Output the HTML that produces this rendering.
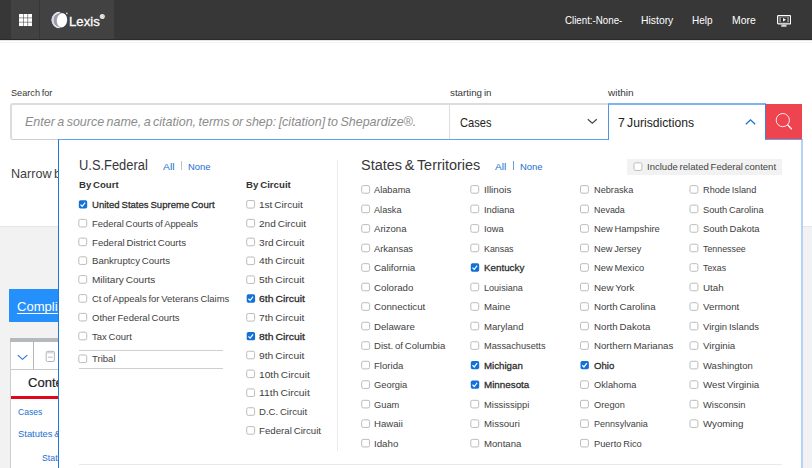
<!DOCTYPE html>
<html><head><meta charset="utf-8"><title>Lexis</title>
<style>
*{box-sizing:border-box;margin:0;padding:0}
html,body{width:812px;height:468px;overflow:hidden;background:#fff;font-family:"Liberation Sans",sans-serif;color:#373739}
body{position:relative}
.a{position:absolute}
.t{position:absolute;white-space:nowrap;display:inline-block;transform-origin:0 50%;word-spacing:-0.085em}
#hdr{left:0;top:0;width:812px;height:40px;background:#373738}
.cell{position:absolute;top:0;height:40px;background:#424243}
#clip{position:absolute;left:0;top:0;width:58.5px;height:468px;overflow:hidden}
#panel{position:absolute;left:58px;top:139px;width:745px;height:340px;background:#fff;border:1px solid #1f79d8;border-right:2px solid #b4d4f5;border-top-color:#5fa3e8}
</style></head><body>
<div id="hdr" class="a">
  <div class="cell" style="left:11.2px;width:28px"></div>
  <div class="cell" style="left:39.8px;width:73.8px"></div>
  <svg class="a" style="left:18.8px;top:14.4px" width="13.2" height="12.2" viewBox="0 0 13.2 12.2"><g fill="#fff"><rect x="0.00" y="0.00" width="4.0" height="3.65"/><rect x="4.55" y="0.00" width="4.0" height="3.65"/><rect x="9.10" y="0.00" width="4.0" height="3.65"/><rect x="0.00" y="4.20" width="4.0" height="3.65"/><rect x="4.55" y="4.20" width="4.0" height="3.65"/><rect x="9.10" y="4.20" width="4.0" height="3.65"/><rect x="0.00" y="8.40" width="4.0" height="3.65"/><rect x="4.55" y="8.40" width="4.0" height="3.65"/><rect x="9.10" y="8.40" width="4.0" height="3.65"/></g></svg>
  <svg class="a" style="left:51px;top:11px" width="18" height="18" viewBox="0 0 18 18"><circle cx="8.7" cy="9.1" r="7.7" fill="#9c9ca8"/><path d="M8.7 1.4 A7.7 7.7 0 0 0 8.7 16.8" stroke="#f4f4fa" stroke-width="1.1" fill="none"/><path d="M7.2 2 A7.6 7.6 0 0 0 6.6 16.2" stroke="#ececf8" stroke-width="1" fill="none"/><path d="M5.2 3 A7.4 7.4 0 0 0 4.4 14.9" stroke="#dcdcf0" stroke-width="0.9" fill="none"/><path d="M3.2 4.4 A7.4 7.4 0 0 0 2.8 13.6" stroke="#d0d0ea" stroke-width="0.8" fill="none"/><ellipse cx="10.9" cy="9.3" rx="5.1" ry="7.1" fill="#fff" transform="rotate(8 10.9 9.3)"/><circle cx="15.8" cy="2.4" r="0.8" fill="#e6e6e6"/></svg>
  <svg class="a" style="left:777px;top:15px" width="14.2" height="12.4" viewBox="0 0 14.2 12.4"><rect x="0.6" y="0.6" width="13" height="8.3" rx="0.8" fill="none" stroke="#fff" stroke-width="1.2"/><rect x="2.2" y="2.1" width="9.8" height="5.3" fill="#8c8c90"/><rect x="4" y="2.6" width="6.2" height="4.3" fill="#2c2c30"/><path d="M6 3 L9.2 4.75 L6 6.5Z" fill="#fff"/><rect x="4.3" y="9.6" width="5.2" height="2.2" fill="#cfd4d8"/></svg>
</div>
<div class="a" style="left:0;top:39px;width:812px;height:1px;background:#2a2a2a"></div>
<div class="a" style="left:0;top:40px;width:812px;height:1px;background:#e4e4e4"></div>
<div class="a" style="left:0;top:42px;width:812px;height:1px;background:#f5f5f5"></div>
<div class="a" style="left:0;top:226px;width:812px;height:243px;background:#f2f2f2;border-top:1px solid #e6e6e6"></div>
<!-- search bar -->
<div class="a" style="left:10px;top:103px;width:440px;height:37px;border:1px solid #cfcfcf;border-top:2px solid #dcdcdc;border-left:2px solid #dcdcdc;border-right:none;background:#fff;border-radius:3px 0 0 3px"></div>
<div class="a" style="left:449px;top:103px;width:160px;height:37px;border:1px solid #cfcfcf;border-top:2px solid #dcdcdc;border-left-color:#ddd;background:#fff"></div>
<svg class="a" style="left:586.8px;top:118.2px" width="11" height="7" viewBox="0 0 11 7"><path d="M0.8 1.2 L5.3 5.3 L9.8 1.2" fill="none" stroke="#444" stroke-width="1.15"/></svg>
<div id="clip">
<div class="a" style="left:9px;top:289px;width:60px;height:33px;background:#2590fc"></div>
<div class="a" style="left:10px;top:338px;width:60px;height:140px;background:#fff;border-left:1px solid #cdcdcd"></div>
<div class="a" style="left:10px;top:338px;width:60px;height:4px;background:#b6b9bb"></div>
<div class="a" style="left:33px;top:342px;width:1px;height:28px;background:#b4b4b4"></div>
<div class="a" style="left:11px;top:369px;width:60px;height:1px;background:#c8c8c8"></div>
<svg class="a" style="left:16.8px;top:354.1px" width="11" height="7" viewBox="0 0 11 7"><path d="M0.7 1.2 L5.5 5.4 L10.3 1.2" fill="none" stroke="#1b6fd8" stroke-width="1.05"/></svg>
<svg class="a" style="left:45px;top:349.5px" width="11" height="13" viewBox="0 0 11 13"><rect x="1.2" y="1.3" width="8.2" height="10.2" rx="1.4" fill="#fff" stroke="#b4b4c0" stroke-width="1"/><rect x="1.8" y="2" width="7" height="1.4" fill="#d8d8d8"/><rect x="3" y="6.7" width="4.6" height="0.9" fill="#b4b4b4"/></svg>
<div class="a" style="left:11px;top:396px;width:60px;height:3px;background:#e2061a"></div>
</div>
<span class="t" id="t0" style="left:69px;top:14.25px;font-size:13.7px;line-height:15px;transform:scaleX(0.9639);color:#fff;-webkit-text-stroke:0.3px #fff">Lexis</span>
<span class="t" id="t1" style="left:100px;top:14.25px;font-size:5.6px;line-height:6px;transform:scaleX(1.0909);color:#fff;font-weight:bold;-webkit-text-stroke:0.3px #fff">®</span>
<span class="t" id="t2" style="left:565px;top:14.25px;font-size:10.5px;line-height:12px;transform:scaleX(0.9263);color:#fff">Client:-None-</span>
<span class="t" id="t3" style="left:641px;top:14.25px;font-size:10.5px;line-height:12px;transform:scaleX(0.9886);color:#fff">History</span>
<span class="t" id="t4" style="left:692px;top:14.25px;font-size:10.5px;line-height:12px;transform:scaleX(0.9487);color:#fff">Help</span>
<span class="t" id="t5" style="left:732px;top:14.25px;font-size:10.5px;line-height:12px;transform:scaleX(0.9901);color:#fff">More</span>
<span class="t" id="t6" style="left:11px;top:87.25px;font-size:9.8px;line-height:11px;transform:scaleX(0.9330);color:#373739">Search for</span>
<span class="t" id="t7" style="left:450px;top:87.25px;font-size:9.8px;line-height:11px;transform:scaleX(0.9974);color:#373739">starting in</span>
<span class="t" id="t8" style="left:608px;top:87.25px;font-size:9.8px;line-height:11px;transform:scaleX(1.0254);color:#373739">within</span>
<span class="t" id="t9" style="left:25px;top:115.25px;font-size:12.6px;line-height:14px;transform:scaleX(0.9921);color:#8c8c8c;font-style:italic">Enter a source name, a citation, terms or shep: [citation] to Shepardize®.</span>
<span class="t" id="t10" style="left:460px;top:116.25px;font-size:12.6px;line-height:14px;transform:scaleX(0.8823);color:#222">Cases</span>
<span class="t" id="t12" style="left:11px;top:167.25px;font-size:12.4px;line-height:14px;transform:scaleX(1.0153);color:#3e3e40">Narrow by</span>
<span class="t" id="t13" style="left:17px;top:299.25px;font-size:12.8px;line-height:15px;transform:scaleX(1.0194);color:#fff;text-decoration:underline;text-decoration-thickness:1px;text-underline-offset:1.5px">Compliance</span>
<span class="t" id="t14" style="left:28px;top:375.25px;font-size:12.9px;line-height:15px;transform:scaleX(1.0098);color:#222;-webkit-text-stroke:0.2px #222">Content</span>
<span class="t" id="t15" style="left:18px;top:406.25px;font-size:9.8px;line-height:11px;transform:scaleX(0.8783);color:#1b70d0">Cases</span>
<span class="t" id="t16" style="left:18px;top:428.25px;font-size:9.8px;line-height:11px;transform:scaleX(0.9596);color:#1b70d0">Statutes &amp;</span>
<span class="t" id="t17" style="left:42px;top:452.25px;font-size:9.8px;line-height:11px;transform:scaleX(0.8946);color:#1b70d0">Statutes</span>
<div id="panel"></div>
<div class="a" id="pin" style="left:0;top:0;width:812px;height:468px;z-index:10">
<div class="a" style="left:608px;top:103px;width:158px;height:37px;border:1px solid #4a96e4;border-top:2px solid #7fb5ed;border-bottom:none;background:#fff"></div>
<svg class="a" style="left:744.5px;top:118.4px" width="11" height="8" viewBox="0 0 11 8"><path d="M0.8 6.3 L5.5 1.8 L10.2 6.3" fill="none" stroke="#1b6fd8" stroke-width="1.25"/></svg>
<div class="a" style="left:765px;top:104px;width:37px;height:35px;background:#ee444f;border-left:1px solid #3a86dc"></div>
<svg class="a" style="left:773.1px;top:109.9px" width="22" height="22" viewBox="0 0 22 22"><circle cx="9.8" cy="10.1" r="6.6" fill="none" stroke="#ffeef0" stroke-width="0.95"/><path d="M14.5 14.8 L18.8 19.2" stroke="#fff" stroke-width="1.3"/></svg>
<div class="a" style="left:181.2px;top:161.4px;width:1px;height:8.6px;background:#b9c4d0"></div>
<div class="a" style="left:513.1px;top:161.4px;width:1px;height:8.6px;background:#6aa0dc"></div>
<div class="a" style="left:627px;top:159px;width:154.8px;height:16px;background:#f2f2f2"></div>
<div class="a" style="left:337.2px;top:160px;width:1px;height:291px;background:#ebebeb"></div>
<div class="a" style="left:78.5px;top:349.6px;width:144.3px;height:1px;background:#cfcfcf"></div>
<div class="a" style="left:78.5px;top:367.8px;width:144.3px;height:1px;background:#cfcfcf"></div>
<div class="a" style="left:78.5px;top:464.4px;width:703.4px;height:1px;background:#e9e9e9"></div>
<svg class="a" style="left:0;top:0" width="812" height="468" viewBox="0 0 812 468">
<rect x="634.00" y="162.85" width="7.90" height="7.60" rx="1.6" fill="#fff" stroke="#bcbcbc" stroke-width="1"/>
<rect x="78.80" y="200.25" width="8.40" height="8.30" rx="1.7" fill="#1271d6"/><path d="M80.50 204.60 l1.75 1.7 l2.9 -3.75" fill="none" stroke="#fff" stroke-width="1.2"/>
<rect x="78.80" y="219.35" width="7.90" height="7.60" rx="1.6" fill="#fff" stroke="#bcbcbc" stroke-width="1"/>
<rect x="78.80" y="238.10" width="7.90" height="7.60" rx="1.6" fill="#fff" stroke="#bcbcbc" stroke-width="1"/>
<rect x="78.80" y="256.85" width="7.90" height="7.60" rx="1.6" fill="#fff" stroke="#bcbcbc" stroke-width="1"/>
<rect x="78.80" y="275.60" width="7.90" height="7.60" rx="1.6" fill="#fff" stroke="#bcbcbc" stroke-width="1"/>
<rect x="78.80" y="294.60" width="7.90" height="7.60" rx="1.6" fill="#fff" stroke="#bcbcbc" stroke-width="1"/>
<rect x="78.80" y="313.35" width="7.90" height="7.60" rx="1.6" fill="#fff" stroke="#bcbcbc" stroke-width="1"/>
<rect x="78.80" y="332.20" width="7.90" height="7.60" rx="1.6" fill="#fff" stroke="#bcbcbc" stroke-width="1"/>
<rect x="78.80" y="355.00" width="7.90" height="7.60" rx="1.6" fill="#fff" stroke="#bcbcbc" stroke-width="1"/>
<rect x="246.70" y="200.50" width="7.90" height="7.60" rx="1.6" fill="#fff" stroke="#bcbcbc" stroke-width="1"/>
<rect x="246.70" y="219.34" width="7.90" height="7.60" rx="1.6" fill="#fff" stroke="#bcbcbc" stroke-width="1"/>
<rect x="246.70" y="238.18" width="7.90" height="7.60" rx="1.6" fill="#fff" stroke="#bcbcbc" stroke-width="1"/>
<rect x="246.70" y="257.02" width="7.90" height="7.60" rx="1.6" fill="#fff" stroke="#bcbcbc" stroke-width="1"/>
<rect x="246.70" y="275.86" width="7.90" height="7.60" rx="1.6" fill="#fff" stroke="#bcbcbc" stroke-width="1"/>
<rect x="246.70" y="294.35" width="8.40" height="8.30" rx="1.7" fill="#1271d6"/><path d="M248.40 298.70 l1.75 1.7 l2.9 -3.75" fill="none" stroke="#fff" stroke-width="1.2"/>
<rect x="246.70" y="313.54" width="7.90" height="7.60" rx="1.6" fill="#fff" stroke="#bcbcbc" stroke-width="1"/>
<rect x="246.70" y="332.03" width="8.40" height="8.30" rx="1.7" fill="#1271d6"/><path d="M248.40 336.38 l1.75 1.7 l2.9 -3.75" fill="none" stroke="#fff" stroke-width="1.2"/>
<rect x="246.70" y="351.22" width="7.90" height="7.60" rx="1.6" fill="#fff" stroke="#bcbcbc" stroke-width="1"/>
<rect x="246.70" y="370.06" width="7.90" height="7.60" rx="1.6" fill="#fff" stroke="#bcbcbc" stroke-width="1"/>
<rect x="246.70" y="388.90" width="7.90" height="7.60" rx="1.6" fill="#fff" stroke="#bcbcbc" stroke-width="1"/>
<rect x="246.70" y="407.74" width="7.90" height="7.60" rx="1.6" fill="#fff" stroke="#bcbcbc" stroke-width="1"/>
<rect x="246.70" y="426.58" width="7.90" height="7.60" rx="1.6" fill="#fff" stroke="#bcbcbc" stroke-width="1"/>
<rect x="361.70" y="185.60" width="7.90" height="7.60" rx="1.6" fill="#fff" stroke="#bcbcbc" stroke-width="1"/>
<rect x="361.70" y="205.12" width="7.90" height="7.60" rx="1.6" fill="#fff" stroke="#bcbcbc" stroke-width="1"/>
<rect x="361.70" y="224.64" width="7.90" height="7.60" rx="1.6" fill="#fff" stroke="#bcbcbc" stroke-width="1"/>
<rect x="361.70" y="244.16" width="7.90" height="7.60" rx="1.6" fill="#fff" stroke="#bcbcbc" stroke-width="1"/>
<rect x="361.70" y="263.68" width="7.90" height="7.60" rx="1.6" fill="#fff" stroke="#bcbcbc" stroke-width="1"/>
<rect x="361.70" y="283.20" width="7.90" height="7.60" rx="1.6" fill="#fff" stroke="#bcbcbc" stroke-width="1"/>
<rect x="361.70" y="302.72" width="7.90" height="7.60" rx="1.6" fill="#fff" stroke="#bcbcbc" stroke-width="1"/>
<rect x="361.70" y="322.24" width="7.90" height="7.60" rx="1.6" fill="#fff" stroke="#bcbcbc" stroke-width="1"/>
<rect x="361.70" y="341.76" width="7.90" height="7.60" rx="1.6" fill="#fff" stroke="#bcbcbc" stroke-width="1"/>
<rect x="361.70" y="361.28" width="7.90" height="7.60" rx="1.6" fill="#fff" stroke="#bcbcbc" stroke-width="1"/>
<rect x="361.70" y="380.80" width="7.90" height="7.60" rx="1.6" fill="#fff" stroke="#bcbcbc" stroke-width="1"/>
<rect x="361.70" y="400.32" width="7.90" height="7.60" rx="1.6" fill="#fff" stroke="#bcbcbc" stroke-width="1"/>
<rect x="361.70" y="419.84" width="7.90" height="7.60" rx="1.6" fill="#fff" stroke="#bcbcbc" stroke-width="1"/>
<rect x="361.70" y="439.36" width="7.90" height="7.60" rx="1.6" fill="#fff" stroke="#bcbcbc" stroke-width="1"/>
<rect x="470.80" y="185.60" width="7.90" height="7.60" rx="1.6" fill="#fff" stroke="#bcbcbc" stroke-width="1"/>
<rect x="470.80" y="205.12" width="7.90" height="7.60" rx="1.6" fill="#fff" stroke="#bcbcbc" stroke-width="1"/>
<rect x="470.80" y="224.64" width="7.90" height="7.60" rx="1.6" fill="#fff" stroke="#bcbcbc" stroke-width="1"/>
<rect x="470.80" y="244.16" width="7.90" height="7.60" rx="1.6" fill="#fff" stroke="#bcbcbc" stroke-width="1"/>
<rect x="470.80" y="263.33" width="8.40" height="8.30" rx="1.7" fill="#1271d6"/><path d="M472.50 267.68 l1.75 1.7 l2.9 -3.75" fill="none" stroke="#fff" stroke-width="1.2"/>
<rect x="470.80" y="283.20" width="7.90" height="7.60" rx="1.6" fill="#fff" stroke="#bcbcbc" stroke-width="1"/>
<rect x="470.80" y="302.72" width="7.90" height="7.60" rx="1.6" fill="#fff" stroke="#bcbcbc" stroke-width="1"/>
<rect x="470.80" y="322.24" width="7.90" height="7.60" rx="1.6" fill="#fff" stroke="#bcbcbc" stroke-width="1"/>
<rect x="470.80" y="341.76" width="7.90" height="7.60" rx="1.6" fill="#fff" stroke="#bcbcbc" stroke-width="1"/>
<rect x="470.80" y="360.93" width="8.40" height="8.30" rx="1.7" fill="#1271d6"/><path d="M472.50 365.28 l1.75 1.7 l2.9 -3.75" fill="none" stroke="#fff" stroke-width="1.2"/>
<rect x="470.80" y="380.45" width="8.40" height="8.30" rx="1.7" fill="#1271d6"/><path d="M472.50 384.80 l1.75 1.7 l2.9 -3.75" fill="none" stroke="#fff" stroke-width="1.2"/>
<rect x="470.80" y="400.32" width="7.90" height="7.60" rx="1.6" fill="#fff" stroke="#bcbcbc" stroke-width="1"/>
<rect x="470.80" y="419.84" width="7.90" height="7.60" rx="1.6" fill="#fff" stroke="#bcbcbc" stroke-width="1"/>
<rect x="470.80" y="439.36" width="7.90" height="7.60" rx="1.6" fill="#fff" stroke="#bcbcbc" stroke-width="1"/>
<rect x="580.50" y="185.60" width="7.90" height="7.60" rx="1.6" fill="#fff" stroke="#bcbcbc" stroke-width="1"/>
<rect x="580.50" y="205.12" width="7.90" height="7.60" rx="1.6" fill="#fff" stroke="#bcbcbc" stroke-width="1"/>
<rect x="580.50" y="224.64" width="7.90" height="7.60" rx="1.6" fill="#fff" stroke="#bcbcbc" stroke-width="1"/>
<rect x="580.50" y="244.16" width="7.90" height="7.60" rx="1.6" fill="#fff" stroke="#bcbcbc" stroke-width="1"/>
<rect x="580.50" y="263.68" width="7.90" height="7.60" rx="1.6" fill="#fff" stroke="#bcbcbc" stroke-width="1"/>
<rect x="580.50" y="283.20" width="7.90" height="7.60" rx="1.6" fill="#fff" stroke="#bcbcbc" stroke-width="1"/>
<rect x="580.50" y="302.72" width="7.90" height="7.60" rx="1.6" fill="#fff" stroke="#bcbcbc" stroke-width="1"/>
<rect x="580.50" y="322.24" width="7.90" height="7.60" rx="1.6" fill="#fff" stroke="#bcbcbc" stroke-width="1"/>
<rect x="580.50" y="341.76" width="7.90" height="7.60" rx="1.6" fill="#fff" stroke="#bcbcbc" stroke-width="1"/>
<rect x="580.50" y="360.93" width="8.40" height="8.30" rx="1.7" fill="#1271d6"/><path d="M582.20 365.28 l1.75 1.7 l2.9 -3.75" fill="none" stroke="#fff" stroke-width="1.2"/>
<rect x="580.50" y="380.80" width="7.90" height="7.60" rx="1.6" fill="#fff" stroke="#bcbcbc" stroke-width="1"/>
<rect x="580.50" y="400.32" width="7.90" height="7.60" rx="1.6" fill="#fff" stroke="#bcbcbc" stroke-width="1"/>
<rect x="580.50" y="419.84" width="7.90" height="7.60" rx="1.6" fill="#fff" stroke="#bcbcbc" stroke-width="1"/>
<rect x="580.50" y="439.36" width="7.90" height="7.60" rx="1.6" fill="#fff" stroke="#bcbcbc" stroke-width="1"/>
<rect x="690.00" y="185.60" width="7.90" height="7.60" rx="1.6" fill="#fff" stroke="#bcbcbc" stroke-width="1"/>
<rect x="690.00" y="205.12" width="7.90" height="7.60" rx="1.6" fill="#fff" stroke="#bcbcbc" stroke-width="1"/>
<rect x="690.00" y="224.64" width="7.90" height="7.60" rx="1.6" fill="#fff" stroke="#bcbcbc" stroke-width="1"/>
<rect x="690.00" y="244.16" width="7.90" height="7.60" rx="1.6" fill="#fff" stroke="#bcbcbc" stroke-width="1"/>
<rect x="690.00" y="263.68" width="7.90" height="7.60" rx="1.6" fill="#fff" stroke="#bcbcbc" stroke-width="1"/>
<rect x="690.00" y="283.20" width="7.90" height="7.60" rx="1.6" fill="#fff" stroke="#bcbcbc" stroke-width="1"/>
<rect x="690.00" y="302.72" width="7.90" height="7.60" rx="1.6" fill="#fff" stroke="#bcbcbc" stroke-width="1"/>
<rect x="690.00" y="322.24" width="7.90" height="7.60" rx="1.6" fill="#fff" stroke="#bcbcbc" stroke-width="1"/>
<rect x="690.00" y="341.76" width="7.90" height="7.60" rx="1.6" fill="#fff" stroke="#bcbcbc" stroke-width="1"/>
<rect x="690.00" y="361.28" width="7.90" height="7.60" rx="1.6" fill="#fff" stroke="#bcbcbc" stroke-width="1"/>
<rect x="690.00" y="380.80" width="7.90" height="7.60" rx="1.6" fill="#fff" stroke="#bcbcbc" stroke-width="1"/>
<rect x="690.00" y="400.32" width="7.90" height="7.60" rx="1.6" fill="#fff" stroke="#bcbcbc" stroke-width="1"/>
<rect x="690.00" y="419.84" width="7.90" height="7.60" rx="1.6" fill="#fff" stroke="#bcbcbc" stroke-width="1"/>
</svg>
<span class="t" id="t11" style="left:618px;top:116.25px;font-size:12.6px;line-height:14px;transform:scaleX(0.9653);color:#222">7 Jurisdictions</span>
<span class="t" id="t18" style="left:79px;top:157.25px;font-size:14px;line-height:16px;transform:scaleX(0.9210);color:#373739">U.S.Federal</span>
<span class="t" id="t19" style="left:163px;top:161.25px;font-size:9.6px;line-height:11px;transform:scaleX(1.0776);color:#1a6fd0">All</span>
<span class="t" id="t20" style="left:188px;top:161.25px;font-size:9.6px;line-height:11px;transform:scaleX(0.9809);color:#1a6fd0">None</span>
<span class="t" id="t21" style="left:79px;top:179.25px;font-size:9.9px;line-height:11px;transform:scaleX(0.9692);color:#333;font-weight:bold">By Court</span>
<span class="t" id="t22" style="left:246px;top:179.25px;font-size:9.9px;line-height:11px;transform:scaleX(0.9779);color:#333;font-weight:bold">By Circuit</span>
<span class="t" id="t23" style="left:361px;top:157.25px;font-size:14px;line-height:16px;transform:scaleX(1.0316);color:#373739">States &amp; Territories</span>
<span class="t" id="t24" style="left:495px;top:161.25px;font-size:9.6px;line-height:11px;transform:scaleX(1.0589);color:#1a6fd0">All</span>
<span class="t" id="t25" style="left:520px;top:161.25px;font-size:9.6px;line-height:11px;transform:scaleX(0.9853);color:#1a6fd0">None</span>
<span class="t" id="t26" style="left:647px;top:161.25px;font-size:9.8px;line-height:11px;transform:scaleX(0.9734);color:#444">Include related Federal content</span>
<span class="t" id="t27" style="left:92px;top:199.25px;font-size:9.9px;line-height:11px;transform:scaleX(0.9690);color:#2a2a2a;-webkit-text-stroke:0.26px #2a2a2a">United States Supreme Court</span>
<span class="t" id="t28" style="left:92px;top:218.25px;font-size:9.9px;line-height:11px;transform:scaleX(0.9498);color:#3e3e3e">Federal Courts of Appeals</span>
<span class="t" id="t29" style="left:92px;top:237.25px;font-size:9.9px;line-height:11px;transform:scaleX(0.9741);color:#3e3e3e">Federal District Courts</span>
<span class="t" id="t30" style="left:92px;top:255.25px;font-size:9.9px;line-height:11px;transform:scaleX(0.9709);color:#3e3e3e">Bankruptcy Courts</span>
<span class="t" id="t31" style="left:92px;top:274.25px;font-size:9.9px;line-height:11px;transform:scaleX(1.0166);color:#3e3e3e">Military Courts</span>
<span class="t" id="t32" style="left:92px;top:293.25px;font-size:9.9px;line-height:11px;transform:scaleX(0.9571);color:#3e3e3e">Ct of Appeals for Veterans Claims</span>
<span class="t" id="t33" style="left:92px;top:312.25px;font-size:9.9px;line-height:11px;transform:scaleX(0.9613);color:#3e3e3e">Other Federal Courts</span>
<span class="t" id="t34" style="left:92px;top:331.25px;font-size:9.9px;line-height:11px;transform:scaleX(0.9608);color:#3e3e3e">Tax Court</span>
<span class="t" id="t35" style="left:92px;top:353.25px;font-size:9.9px;line-height:11px;transform:scaleX(0.9680);color:#3e3e3e">Tribal</span>
<span class="t" id="t36" style="left:259px;top:199.25px;font-size:9.9px;line-height:11px;transform:scaleX(1.0171);color:#3e3e3e">1st Circuit</span>
<span class="t" id="t37" style="left:259px;top:218.25px;font-size:9.9px;line-height:11px;transform:scaleX(1.0149);color:#3e3e3e">2nd Circuit</span>
<span class="t" id="t38" style="left:259px;top:237.25px;font-size:9.9px;line-height:11px;transform:scaleX(1.0259);color:#3e3e3e">3rd Circuit</span>
<span class="t" id="t39" style="left:259px;top:255.25px;font-size:9.9px;line-height:11px;transform:scaleX(1.0384);color:#3e3e3e">4th Circuit</span>
<span class="t" id="t40" style="left:259px;top:274.25px;font-size:9.9px;line-height:11px;transform:scaleX(1.0384);color:#3e3e3e">5th Circuit</span>
<span class="t" id="t41" style="left:259px;top:293.25px;font-size:9.9px;line-height:11px;transform:scaleX(1.0521);color:#2a2a2a;-webkit-text-stroke:0.26px #2a2a2a">6th Circuit</span>
<span class="t" id="t42" style="left:259px;top:312.25px;font-size:9.9px;line-height:11px;transform:scaleX(1.0384);color:#3e3e3e">7th Circuit</span>
<span class="t" id="t43" style="left:259px;top:331.25px;font-size:9.9px;line-height:11px;transform:scaleX(1.0521);color:#2a2a2a;-webkit-text-stroke:0.26px #2a2a2a">8th Circuit</span>
<span class="t" id="t44" style="left:259px;top:350.25px;font-size:9.9px;line-height:11px;transform:scaleX(1.0384);color:#3e3e3e">9th Circuit</span>
<span class="t" id="t45" style="left:259px;top:369.25px;font-size:9.9px;line-height:11px;transform:scaleX(1.0344);color:#3e3e3e">10th Circuit</span>
<span class="t" id="t46" style="left:259px;top:387.25px;font-size:9.9px;line-height:11px;transform:scaleX(1.0501);color:#3e3e3e">11th Circuit</span>
<span class="t" id="t47" style="left:259px;top:406.25px;font-size:9.9px;line-height:11px;transform:scaleX(0.9680);color:#3e3e3e">D.C. Circuit</span>
<span class="t" id="t48" style="left:259px;top:425.25px;font-size:9.9px;line-height:11px;transform:scaleX(0.9791);color:#3e3e3e">Federal Circuit</span>
<span class="t" id="t49" style="left:374px;top:184.25px;font-size:9.9px;line-height:11px;transform:scaleX(0.9363);color:#3e3e3e">Alabama</span>
<span class="t" id="t50" style="left:374px;top:204.25px;font-size:9.9px;line-height:11px;transform:scaleX(0.9295);color:#3e3e3e">Alaska</span>
<span class="t" id="t51" style="left:374px;top:223.25px;font-size:9.9px;line-height:11px;transform:scaleX(0.9721);color:#3e3e3e">Arizona</span>
<span class="t" id="t52" style="left:374px;top:243.25px;font-size:9.9px;line-height:11px;transform:scaleX(0.9485);color:#3e3e3e">Arkansas</span>
<span class="t" id="t53" style="left:374px;top:262.25px;font-size:9.9px;line-height:11px;transform:scaleX(0.9900);color:#3e3e3e">California</span>
<span class="t" id="t54" style="left:374px;top:282.25px;font-size:9.9px;line-height:11px;transform:scaleX(0.9806);color:#3e3e3e">Colorado</span>
<span class="t" id="t55" style="left:374px;top:301.25px;font-size:9.9px;line-height:11px;transform:scaleX(0.9836);color:#3e3e3e">Connecticut</span>
<span class="t" id="t56" style="left:374px;top:321.25px;font-size:9.9px;line-height:11px;transform:scaleX(0.9780);color:#3e3e3e">Delaware</span>
<span class="t" id="t57" style="left:374px;top:340.25px;font-size:9.9px;line-height:11px;transform:scaleX(0.9699);color:#3e3e3e">Dist. of Columbia</span>
<span class="t" id="t58" style="left:374px;top:360.25px;font-size:9.9px;line-height:11px;transform:scaleX(0.9706);color:#3e3e3e">Florida</span>
<span class="t" id="t59" style="left:374px;top:379.25px;font-size:9.9px;line-height:11px;transform:scaleX(0.9476);color:#3e3e3e">Georgia</span>
<span class="t" id="t60" style="left:374px;top:399.25px;font-size:9.9px;line-height:11px;transform:scaleX(0.9403);color:#3e3e3e">Guam</span>
<span class="t" id="t61" style="left:374px;top:418.25px;font-size:9.9px;line-height:11px;transform:scaleX(0.9716);color:#3e3e3e">Hawaii</span>
<span class="t" id="t62" style="left:374px;top:438.25px;font-size:9.9px;line-height:11px;transform:scaleX(0.9831);color:#3e3e3e">Idaho</span>
<span class="t" id="t63" style="left:484px;top:184.25px;font-size:9.9px;line-height:11px;transform:scaleX(0.9944);color:#3e3e3e">Illinois</span>
<span class="t" id="t64" style="left:484px;top:204.25px;font-size:9.9px;line-height:11px;transform:scaleX(0.9427);color:#3e3e3e">Indiana</span>
<span class="t" id="t65" style="left:484px;top:223.25px;font-size:9.9px;line-height:11px;transform:scaleX(0.9492);color:#3e3e3e">Iowa</span>
<span class="t" id="t66" style="left:484px;top:243.25px;font-size:9.9px;line-height:11px;transform:scaleX(0.8967);color:#3e3e3e">Kansas</span>
<span class="t" id="t67" style="left:484px;top:262.25px;font-size:9.9px;line-height:11px;transform:scaleX(0.9920);color:#2a2a2a;-webkit-text-stroke:0.26px #2a2a2a">Kentucky</span>
<span class="t" id="t68" style="left:484px;top:282.25px;font-size:9.9px;line-height:11px;transform:scaleX(0.9177);color:#3e3e3e">Louisiana</span>
<span class="t" id="t69" style="left:484px;top:301.25px;font-size:9.9px;line-height:11px;transform:scaleX(0.9775);color:#3e3e3e">Maine</span>
<span class="t" id="t70" style="left:484px;top:321.25px;font-size:9.9px;line-height:11px;transform:scaleX(0.9735);color:#3e3e3e">Maryland</span>
<span class="t" id="t71" style="left:484px;top:340.25px;font-size:9.9px;line-height:11px;transform:scaleX(0.9343);color:#3e3e3e">Massachusetts</span>
<span class="t" id="t72" style="left:484px;top:360.25px;font-size:9.9px;line-height:11px;transform:scaleX(0.9815);color:#2a2a2a;-webkit-text-stroke:0.26px #2a2a2a">Michigan</span>
<span class="t" id="t73" style="left:484px;top:379.25px;font-size:9.9px;line-height:11px;transform:scaleX(0.9942);color:#2a2a2a;-webkit-text-stroke:0.26px #2a2a2a">Minnesota</span>
<span class="t" id="t74" style="left:484px;top:399.25px;font-size:9.9px;line-height:11px;transform:scaleX(0.9487);color:#3e3e3e">Mississippi</span>
<span class="t" id="t75" style="left:484px;top:418.25px;font-size:9.9px;line-height:11px;transform:scaleX(0.9737);color:#3e3e3e">Missouri</span>
<span class="t" id="t76" style="left:484px;top:438.25px;font-size:9.9px;line-height:11px;transform:scaleX(0.9704);color:#3e3e3e">Montana</span>
<span class="t" id="t77" style="left:594px;top:184.25px;font-size:9.9px;line-height:11px;transform:scaleX(0.9298);color:#3e3e3e">Nebraska</span>
<span class="t" id="t78" style="left:594px;top:204.25px;font-size:9.9px;line-height:11px;transform:scaleX(0.9046);color:#3e3e3e">Nevada</span>
<span class="t" id="t79" style="left:594px;top:223.25px;font-size:9.9px;line-height:11px;transform:scaleX(0.9480);color:#3e3e3e">New Hampshire</span>
<span class="t" id="t80" style="left:594px;top:243.25px;font-size:9.9px;line-height:11px;transform:scaleX(0.9320);color:#3e3e3e">New Jersey</span>
<span class="t" id="t81" style="left:594px;top:262.25px;font-size:9.9px;line-height:11px;transform:scaleX(0.9502);color:#3e3e3e">New Mexico</span>
<span class="t" id="t82" style="left:594px;top:282.25px;font-size:9.9px;line-height:11px;transform:scaleX(0.9859);color:#3e3e3e">New York</span>
<span class="t" id="t83" style="left:594px;top:301.25px;font-size:9.9px;line-height:11px;transform:scaleX(0.9797);color:#3e3e3e">North Carolina</span>
<span class="t" id="t84" style="left:594px;top:321.25px;font-size:9.9px;line-height:11px;transform:scaleX(0.9818);color:#3e3e3e">North Dakota</span>
<span class="t" id="t85" style="left:594px;top:340.25px;font-size:9.9px;line-height:11px;transform:scaleX(0.9798);color:#3e3e3e">Northern Marianas</span>
<span class="t" id="t86" style="left:594px;top:360.25px;font-size:9.9px;line-height:11px;transform:scaleX(0.9732);color:#2a2a2a;-webkit-text-stroke:0.26px #2a2a2a">Ohio</span>
<span class="t" id="t87" style="left:594px;top:379.25px;font-size:9.9px;line-height:11px;transform:scaleX(0.9397);color:#3e3e3e">Oklahoma</span>
<span class="t" id="t88" style="left:594px;top:399.25px;font-size:9.9px;line-height:11px;transform:scaleX(0.9347);color:#3e3e3e">Oregon</span>
<span class="t" id="t89" style="left:594px;top:418.25px;font-size:9.9px;line-height:11px;transform:scaleX(0.9157);color:#3e3e3e">Pennsylvania</span>
<span class="t" id="t90" style="left:594px;top:438.25px;font-size:9.9px;line-height:11px;transform:scaleX(0.9416);color:#3e3e3e">Puerto Rico</span>
<span class="t" id="t91" style="left:703px;top:184.25px;font-size:9.9px;line-height:11px;transform:scaleX(0.9292);color:#3e3e3e">Rhode Island</span>
<span class="t" id="t92" style="left:703px;top:204.25px;font-size:9.9px;line-height:11px;transform:scaleX(0.9390);color:#3e3e3e">South Carolina</span>
<span class="t" id="t93" style="left:703px;top:223.25px;font-size:9.9px;line-height:11px;transform:scaleX(0.9585);color:#3e3e3e">South Dakota</span>
<span class="t" id="t94" style="left:703px;top:243.25px;font-size:9.9px;line-height:11px;transform:scaleX(0.8960);color:#3e3e3e">Tennessee</span>
<span class="t" id="t95" style="left:703px;top:262.25px;font-size:9.9px;line-height:11px;transform:scaleX(0.8935);color:#3e3e3e">Texas</span>
<span class="t" id="t96" style="left:703px;top:282.25px;font-size:9.9px;line-height:11px;transform:scaleX(0.9972);color:#3e3e3e">Utah</span>
<span class="t" id="t97" style="left:703px;top:301.25px;font-size:9.9px;line-height:11px;transform:scaleX(0.9869);color:#3e3e3e">Vermont</span>
<span class="t" id="t98" style="left:703px;top:321.25px;font-size:9.9px;line-height:11px;transform:scaleX(0.9620);color:#3e3e3e">Virgin Islands</span>
<span class="t" id="t99" style="left:703px;top:340.25px;font-size:9.9px;line-height:11px;transform:scaleX(0.9858);color:#3e3e3e">Virginia</span>
<span class="t" id="t100" style="left:703px;top:360.25px;font-size:9.9px;line-height:11px;transform:scaleX(0.9617);color:#3e3e3e">Washington</span>
<span class="t" id="t101" style="left:703px;top:379.25px;font-size:9.9px;line-height:11px;transform:scaleX(0.9880);color:#3e3e3e">West Virginia</span>
<span class="t" id="t102" style="left:703px;top:399.25px;font-size:9.9px;line-height:11px;transform:scaleX(0.9456);color:#3e3e3e">Wisconsin</span>
<span class="t" id="t103" style="left:703px;top:418.25px;font-size:9.9px;line-height:11px;transform:scaleX(0.9811);color:#3e3e3e">Wyoming</span>
</div>
</body></html>
